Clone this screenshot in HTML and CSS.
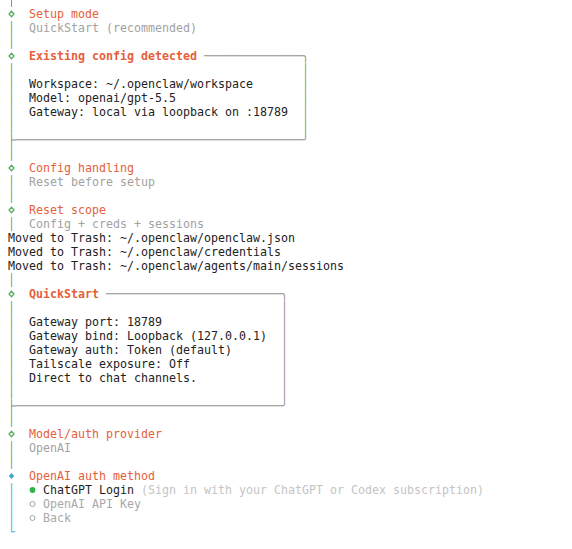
FILE: index.html
```html
<!DOCTYPE html>
<html>
<head>
<meta charset="utf-8">
<link rel="stylesheet" href="styles.css">
</head>
<body>
<div class="term">
  <div class="stub"></div>
  <div class="row"><span class="dia"><svg width="7" height="14" viewBox="0 0 7 14"><path d="M3.5 4.2 L6 7 L3.5 9.8 L1 7 Z" fill="none" stroke="#55b05a" stroke-width="1.3"/></svg></span>  <span class="title">Setup mode</span></div>
  <div class="row"><span class="bar">│</span>  <span class="val">QuickStart (recommended)</span></div>
  <div class="row"><span class="bar">│</span></div>
  <div class="row"><span class="dia"><svg width="7" height="14" viewBox="0 0 7 14"><path d="M3.5 4.2 L6 7 L3.5 9.8 L1 7 Z" fill="none" stroke="#55b05a" stroke-width="1.3"/></svg></span>  <span class="title bold">Existing config detected</span> <span class="bar">──────────────╮</span></div>
  <div class="row"><span class="bar">│</span>                                         <span class="bar">│</span></div>
  <div class="row"><span class="bar">│</span>  Workspace: ~/.openclaw/workspace       <span class="bar">│</span></div>
  <div class="row"><span class="bar">│</span>  Model: openai/gpt-5.5                  <span class="bar">│</span></div>
  <div class="row"><span class="bar">│</span>  Gateway: local via loopback on :18789  <span class="bar">│</span></div>
  <div class="row"><span class="bar">│</span>                                         <span class="bar">│</span></div>
  <div class="row"><span class="bar">├─────────────────────────────────────────╯</span></div>
  <div class="row"><span class="bar">│</span></div>
  <div class="row"><span class="dia"><svg width="7" height="14" viewBox="0 0 7 14"><path d="M3.5 4.2 L6 7 L3.5 9.8 L1 7 Z" fill="none" stroke="#55b05a" stroke-width="1.3"/></svg></span>  <span class="title">Config handling</span></div>
  <div class="row"><span class="bar">│</span>  <span class="val">Reset before setup</span></div>
  <div class="row"><span class="bar">│</span></div>
  <div class="row"><span class="dia"><svg width="7" height="14" viewBox="0 0 7 14"><path d="M3.5 4.2 L6 7 L3.5 9.8 L1 7 Z" fill="none" stroke="#55b05a" stroke-width="1.3"/></svg></span>  <span class="title">Reset scope</span></div>
  <div class="row"><span class="bar">│</span>  <span class="val">Config + creds + sessions</span></div>
  <div class="row">Moved to Trash: ~/.openclaw/openclaw.json</div>
  <div class="row">Moved to Trash: ~/.openclaw/credentials</div>
  <div class="row">Moved to Trash: ~/.openclaw/agents/main/sessions</div>
  <div class="row"><span class="bar">│</span></div>
  <div class="row"><span class="dia"><svg width="7" height="14" viewBox="0 0 7 14"><path d="M3.5 4.2 L6 7 L3.5 9.8 L1 7 Z" fill="none" stroke="#55b05a" stroke-width="1.3"/></svg></span>  <span class="title bold">QuickStart</span> <span class="bar">─────────────────────────╮</span></div>
  <div class="row"><span class="bar">│</span>                                      <span class="bar">│</span></div>
  <div class="row"><span class="bar">│</span>  Gateway port: 18789                 <span class="bar">│</span></div>
  <div class="row"><span class="bar">│</span>  Gateway bind: Loopback (127.0.0.1)  <span class="bar">│</span></div>
  <div class="row"><span class="bar">│</span>  Gateway auth: Token (default)       <span class="bar">│</span></div>
  <div class="row"><span class="bar">│</span>  Tailscale exposure: Off             <span class="bar">│</span></div>
  <div class="row"><span class="bar">│</span>  Direct to chat channels.            <span class="bar">│</span></div>
  <div class="row"><span class="bar">│</span>                                      <span class="bar">│</span></div>
  <div class="row"><span class="bar">├──────────────────────────────────────╯</span></div>
  <div class="row"><span class="bar">│</span></div>
  <div class="row"><span class="dia"><svg width="7" height="14" viewBox="0 0 7 14"><path d="M3.5 4.2 L6 7 L3.5 9.8 L1 7 Z" fill="none" stroke="#55b05a" stroke-width="1.3"/></svg></span>  <span class="title">Model/auth provider</span></div>
  <div class="row"><span class="bar">│</span>  <span class="val">OpenAI</span></div>
  <div class="row"><span class="bar">│</span></div>
  <div class="row"><span class="dia"><svg width="7" height="14" viewBox="0 0 7 14"><path d="M3.5 4 L6.2 7 L3.5 10 L0.8 7 Z" fill="#3fa8c8"/></svg></span>  <span class="title">OpenAI auth method</span></div>
  <div class="row"><span class="bar active">│</span>  <span class="dot"><svg width="7" height="14" viewBox="0 0 7 14"><circle cx="3.5" cy="7" r="2.9" fill="#2fb344"/></svg></span> <span class="sel">ChatGPT Login</span> <span class="hint">(Sign in with your ChatGPT or Codex subscription)</span></div>
  <div class="row"><span class="bar active">│</span>  <span class="dot"><svg width="7" height="14" viewBox="0 0 7 14"><circle cx="3.5" cy="7" r="2.5" fill="none" stroke="#9a9a9a" stroke-width="0.9"/></svg></span> <span class="opt">OpenAI API Key</span></div>
  <div class="row"><span class="bar active">│</span>  <span class="dot"><svg width="7" height="14" viewBox="0 0 7 14"><circle cx="3.5" cy="7" r="2.5" fill="none" stroke="#9a9a9a" stroke-width="0.9"/></svg></span> <span class="opt">Back</span></div>
  <div class="row"><span class="bar active">└</span></div>
</div>
</body>
</html>
```

FILE: styles.css
```css
html, body {
  margin: 0;
  padding: 0;
  background: #ffffff;
}

.term {
  display: flex;
  flex-direction: column;
  padding: 0 8px;
  font-family: "DejaVu Sans Mono", monospace;
  font-size: 11.63px;
  color: #222222;
}

.stub {
  height: 7px;
  width: 1px;
  margin-left: 3px;
  background: #8e8e8e;
}

.row {
  height: 14px;
  line-height: 14px;
  white-space: pre;
}

.bar {
  color: #8e8e8e;
}

.bar.active {
  color: #47b2cc;
}

.dia, .dot {
  display: inline-block;
  width: 7px;
  height: 14px;
  vertical-align: top;
}

.dia svg, .dot svg {
  display: block;
}

.title {
  color: #e5603a;
}

.title.bold {
  font-weight: bold;
}

.val {
  color: #a2a2a2;
}

.sel {
  color: #1e1e1e;
}

.hint {
  color: #c4c4c4;
}

.opt {
  color: #a8a8a8;
}
```
